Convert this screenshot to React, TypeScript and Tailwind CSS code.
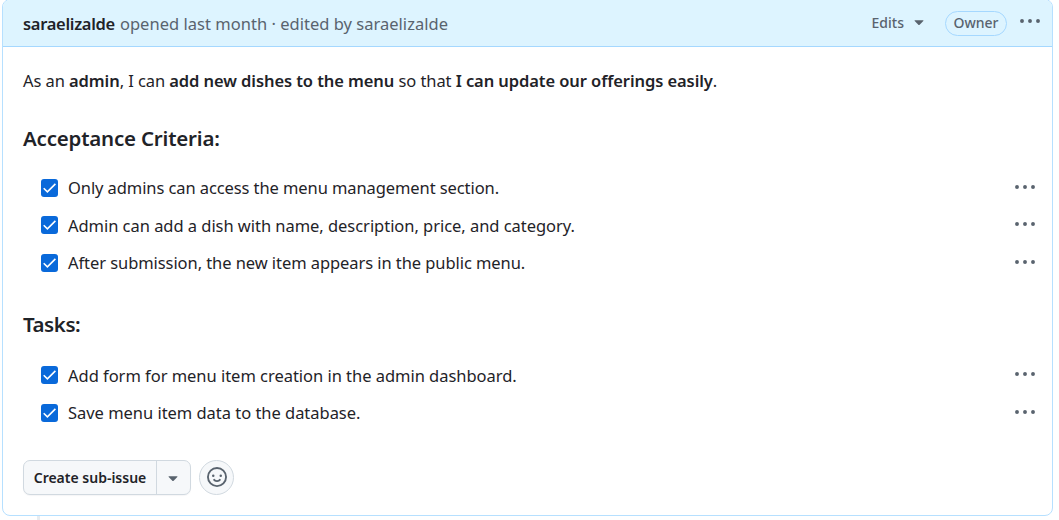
import React from "react";

function Dots({ className = "" }: { className?: string }) {
  return (
    <svg className={className} width="22" height="6" viewBox="0 0 22 6" fill="#59636e" aria-hidden="true">
      <circle cx="3" cy="3" r="1.95" />
      <circle cx="11" cy="3" r="1.95" />
      <circle cx="19" cy="3" r="1.95" />
    </svg>
  );
}

function Caret() {
  return (
    <svg width="10" height="6" viewBox="0 0 10 6" fill="#59636e" aria-hidden="true">
      <path d="M1.1.3h7.8c.5 0 .7.5.4.8L5.4 4.9a.6.6 0 0 1-.8 0L.7 1.1C.4.8.6.3 1.1.3Z" />
    </svg>
  );
}

function Checkbox() {
  return (
    <svg className="shrink-0" width="17" height="18" viewBox="0 0 17 18" aria-hidden="true">
      <rect width="17" height="18" rx="3" fill="#0969da" />
      <path d="M2.7 9.2 6.4 12.9 14.4 4.9" fill="none" stroke="#fff" strokeWidth="1.6" />
    </svg>
  );
}

function Item({ text, className = "" }: { text: string; className?: string }) {
  return (
    <li className="flex h-[37.5px] items-center pl-[38px] pr-[16px]">
      <Checkbox />
      <span className={`ml-[10px] pt-px whitespace-nowrap ${className}`}>{text}</span>
      <Dots className="ml-auto -translate-y-px" />
    </li>
  );
}

export default function App() {
  return (
    <main className="h-[520px] w-[1059px] overflow-hidden bg-white pl-[2px] font-['Noto_Sans',sans-serif] text-[16.5px] leading-[26px] text-[#1f2328]">
      <article className="-mt-px h-[517px] w-[1051px] overflow-hidden rounded-[8px] border border-[#b6e0ff]">
        <header className="flex h-[47px] items-center border-b border-[#a5d8ff] bg-[#ddf4ff] pl-5 pr-[11px] whitespace-nowrap">
          <span className="pt-px font-semibold tracking-[-0.3px]">saraelizalde</span>
          <span className="ml-[5px] pt-px tracking-[0.02px] text-[#59636e]">opened last month · edited by saraelizalde</span>
          <span className="ml-auto text-[14px] font-medium text-[#59636e]">Edits</span>
          <span className="ml-[10px]"><Caret /></span>
          <span className="ml-[21px] flex h-[25px] w-[62px] items-center justify-center rounded-full border border-[#a5d8ff] text-[14px] font-medium text-[#59636e]">Owner</span>
          <Dots className="ml-[12px] -translate-y-[2px]" />
        </header>
        <p className="mt-[21px] pl-5 whitespace-nowrap tracking-[-0.08px]">
          As an <b className="font-semibold">admin</b>, I can <b className="font-semibold">add new dishes to the menu</b> so that <b className="font-semibold">I can update our offerings easily</b>.
        </p>
        <h3 className="mt-[30px] pl-5 text-[20.5px] leading-[28px] font-semibold tracking-[-0.2px]">Acceptance Criteria:</h3>
        <ul className="mt-[17px]">
          <Item className="tracking-[-0.09px]" text="Only admins can access the menu management section." />
          <Item className="tracking-[-0.04px]" text="Admin can add a dish with name, description, price, and category." />
          <Item className="tracking-[-0.07px]" text="After submission, the new item appears in the public menu." />
        </ul>
        <h3 className="mt-[28px] pl-5 text-[20.5px] leading-[28px] font-semibold tracking-[-0.45px]">Tasks:</h3>
        <ul className="mt-[19px]">
          <Item className="tracking-[-0.03px]" text="Add form for menu item creation in the admin dashboard." />
          <Item className="tracking-[-0.03px]" text="Save menu item data to the database." />
        </ul>
        <div className="mt-[28px] flex pl-5">
          <div className="flex h-[35px] w-[168px] rounded-[7px] border border-[#d1d9e0] bg-[#f6f8fa] shadow-[0_1px_1px_#1f23280a]">
            <button className="w-[133px] border-r border-[#d1d9e0] pt-px text-[14px] font-semibold whitespace-nowrap">Create sub-issue</button>
            <button className="flex flex-1 items-center justify-center pt-[4px] pr-px"><Caret /></button>
          </div>
          <button className="ml-2 flex size-[35px] items-center justify-center rounded-full border border-[#d1d9e0] bg-[#f6f8fa]">
            <svg width="20" height="20" viewBox="0 0 16 16" fill="#59636e" aria-hidden="true">
              <path d="M8 0a8 8 0 1 1 0 16A8 8 0 0 1 8 0ZM1.5 8a6.5 6.5 0 1 0 13 0 6.5 6.5 0 0 0-13 0Zm3.82 1.636a.75.75 0 0 1 1.038.175l.007.009c.103.118.22.222.35.31.264.178.683.37 1.285.37.602 0 1.02-.192 1.285-.371.13-.088.247-.192.35-.31l.007-.008a.75.75 0 0 1 1.222.87l-.022-.015c.02.013.021.015.021.015v.001l-.001.002-.002.003-.005.007-.014.019a2.066 2.066 0 0 1-.184.213c-.16.166-.338.316-.53.445-.63.418-1.37.638-2.127.629-.946 0-1.652-.308-2.126-.63a3.331 3.331 0 0 1-.715-.657l-.014-.02-.005-.006-.002-.003v-.002h-.001l.613-.432-.614.43a.75.75 0 0 1 .183-1.044ZM12 7a1 1 0 1 1-2 0 1 1 0 0 1 2 0ZM5 8a1 1 0 1 1 0-2 1 1 0 0 1 0 2Z" />
            </svg>
          </button>
        </div>
      </article>
      <div className="ml-[35px] h-1 w-[3px] bg-[#e8ecf0]" />
    </main>
  );
}
